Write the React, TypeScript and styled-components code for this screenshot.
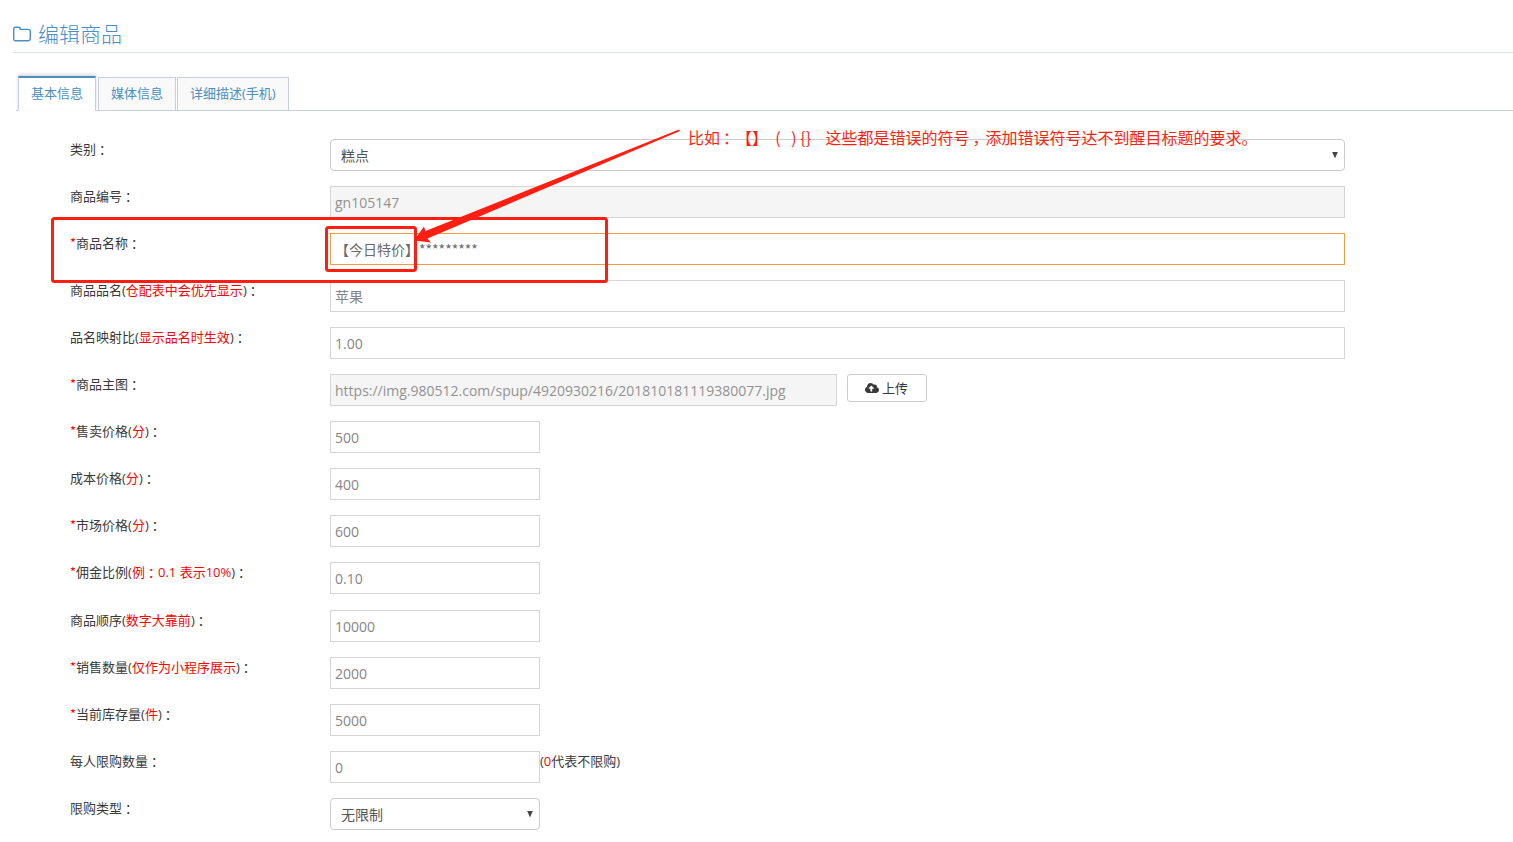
import React, { useId } from 'react';
import styled, { createGlobalStyle } from 'styled-components';
import { FaCloudUploadAlt } from 'react-icons/fa';

const sans = `"Open Sans", "Noto Sans CJK SC", sans-serif`;
const cjk = `"Noto Sans CJK SC", sans-serif`;
const red = '#ff1e12';

const GlobalStyle = createGlobalStyle`
  *, *::before, *::after { box-sizing: border-box; }
  body { margin: 0; background: #fff; color: #393939; font: 13px/20px ${sans}; }
`;

const Page = styled.main`
  position: relative;
  padding: 20px 0 12px 13px;
`;

const Header = styled.header`
  display: flex;
  align-items: flex-start;
  gap: 7px;
  height: 33px;
  border-bottom: 1px solid #d9e4ee;
  color: #478fca;
`;

const Title = styled.h1`
  margin: 0;
  font: 300 21px/26px ${cjk};
`;

const FolderIcon = styled.svg`
  width: 18px;
  height: 16px;
  margin-top: 6px;
  fill: none;
  stroke: currentColor;
  stroke-width: 1.4;
`;

const Tabs = styled.nav`
  display: flex;
  align-items: flex-end;
  gap: 1px;
  height: 35px;
  margin: 23px 0 28px 3px;
  padding-left: 2px;
  border-bottom: 1px solid #c5d0dc;
`;

const Tab = styled.a<{ $active?: boolean }>`
  height: ${p => (p.$active ? 35 : 33)}px;
  margin-bottom: ${p => (p.$active ? -1 : 0)}px;
  margin-right: ${p => (p.$active ? 1 : 0)}px;
  padding: 4px 12px 0;
  border: 1px solid #c5d0dc;
  border-top: ${p => (p.$active ? '2px solid #4c8fbd' : '1px solid #c5d0dc')};
  border-bottom: 0;
  background: ${p => (p.$active ? '#fff' : '#f9f9f9')};
  box-shadow: ${p => (p.$active ? '0 -2px 3px rgba(0, 0, 0, 0.15)' : 'none')};
  color: #4c8fbd;
  line-height: 22px;
  text-decoration: none;
  white-space: nowrap;
`;

const Form = styled.form`
  display: flex;
  flex-direction: column;
  gap: 16px;
  margin: 0 168px 0 57px;
`;

const Group = styled.div`
  display: flex;
  flex-direction: column;
  gap: 15px;
`;

const Row = styled.div`
  display: grid;
  grid-template-columns: 260px minmax(0, 1fr);
  min-height: 32px;
`;

const Label = styled.label`
  white-space: nowrap;
`;

const Mark = styled.span`
  color: #f00;
`;

const Star = styled(Mark)`
  font-family: ${cjk};
`;

const Mid = styled.span`
  margin: 0 -3px 0 3px;
  font-family: ${cjk};
`;

const Field = styled.div`
  display: flex;
  align-items: flex-start;
`;

type Size = 'full' | 'half' | 'small';
const widths: Record<Size, string> = { full: '100%', half: 'calc(50% - 1px)', small: '210px' };

const Input = styled.input<{ $size: Size; $active?: boolean }>`
  width: ${p => widths[p.$size]};
  height: 32px;
  padding: 0 4px;
  border: 1px solid ${p => (p.$active ? '#f59942' : '#d5d5d5')};
  border-radius: 0;
  outline: 0;
  background: ${p => (p.readOnly ? '#f5f5f5' : '#fff')};
  color: ${p => (p.$active ? '#696969' : p.readOnly ? '#939192' : '#858585')};
  font: 14px/20px ${p => (p.$active ? cjk : sans)};
`;

const SelectBox = styled.div<{ $size: Size }>`
  display: grid;
  align-items: center;
  width: ${p => widths[p.$size]};
`;

const Select = styled.select`
  grid-area: 1 / 1;
  width: 100%;
  height: 32px;
  padding: 0 24px 0 10px;
  border: 1px solid #ccc;
  border-radius: 4px;
  appearance: none;
  background: #fff;
  color: #555;
  font: 14px/20px ${cjk};
`;

const Caret = styled.span`
  grid-area: 1 / 1;
  justify-self: end;
  z-index: 1;
  width: 6px;
  height: 7px;
  margin-right: 7px;
  background: #444;
  clip-path: polygon(0 0, 100% 0, 50% 100%);
  pointer-events: none;
`;

const Upload = styled.button`
  display: flex;
  align-items: center;
  justify-content: center;
  gap: 3px;
  width: 80px;
  height: 28px;
  margin-left: 10px;
  padding: 0;
  border: 1px solid #ccc;
  border-radius: 3px;
  background: #fff;
  color: #393939;
  font: 13px/20px ${cjk};
`;

const Markup = styled.svg`
  position: absolute;
  top: 0;
  left: 0;
  width: 700px;
  height: 300px;
  pointer-events: none;
`;

const Note = styled.p`
  position: absolute;
  top: 125px;
  left: 688px;
  margin: 0;
  color: ${red};
  font: 16px/24px ${cjk};
  text-spacing-trim: space-all;
  white-space: pre;
  pointer-events: none;
`;

type RowProps = {
  label: string;
  hint?: string;
  required?: boolean;
  children: (id: string) => React.ReactNode;
};

const centred = (text: string) =>
  text.split('：').map((part, i) => (
    <React.Fragment key={i}>{i > 0 && <Mid>：</Mid>}{part}</React.Fragment>
  ));

function FormRow({ label, hint, required, children }: RowProps) {
  const id = useId();
  return (
    <Row>
      <Label htmlFor={id}>
        {required && <Star>*</Star>}
        {label}
        {hint && <>(<Mark>{centred(hint)}</Mark>)</>}
        {centred('：')}
      </Label>
      <Field>{children(id)}</Field>
    </Row>
  );
}

type TextRowProps = Omit<RowProps, 'children'> & {
  value: string;
  size?: Size;
  active?: boolean;
  readOnly?: boolean;
  after?: React.ReactNode;
};

function TextRow({ value, size = 'small', active, readOnly, after, ...row }: TextRowProps) {
  return (
    <FormRow {...row}>
      {id => (
        <>
          <Input id={id} type="text" defaultValue={value} $size={size} $active={active} readOnly={readOnly} />
          {after}
        </>
      )}
    </FormRow>
  );
}

function SelectRow({ label, option, size }: { label: string; option: string; size: Size }) {
  return (
    <FormRow label={label}>
      {id => (
        <SelectBox $size={size}>
          <Select id={id}><option>{option}</option></Select>
          <Caret />
        </SelectBox>
      )}
    </FormRow>
  );
}

export default function App() {
  return (
    <Page lang="zh-CN">
      <GlobalStyle />
      <Header>
        <FolderIcon viewBox="0 0 18 16">
          <path d="M.7 3.2Q.7 1.2 2.7 1.2H5.6Q7.4 1.2 7.4 3.4H15.2Q17.3 3.4 17.3 5.4V12.6Q17.3 14.7 15.2 14.7H2.7Q.7 14.7 .7 12.6Z" />
        </FolderIcon>
        <Title>编辑商品</Title>
      </Header>
      <Tabs>
        <Tab href="#basic" $active>基本信息</Tab>
        <Tab href="#media">媒体信息</Tab>
        <Tab href="#detail">详细描述(手机)</Tab>
      </Tabs>
      <Form>
        <Group>
          <SelectRow label="类别" option="糕点" size="full" />
          <TextRow label="商品编号" value="gn105147" size="full" readOnly />
          <TextRow label="商品名称" value="【今日特价】*********" size="full" required active />
          <TextRow label="商品品名" hint="仓配表中会优先显示" value="苹果" size="full" />
          <TextRow label="品名映射比" hint="显示品名时生效" value="1.00" size="full" />
          <TextRow
            label="商品主图"
            value="https://img.980512.com/spup/4920930216/201810181119380077.jpg"
            size="half"
            required
            readOnly
            after={<Upload type="button"><FaCloudUploadAlt size={14} />上传</Upload>}
          />
          <TextRow label="售卖价格" hint="分" value="500" required />
          <TextRow label="成本价格" hint="分" value="400" />
          <TextRow label="市场价格" hint="分" value="600" required />
          <TextRow label="佣金比例" hint="例：0.1 表示10%" value="0.10" required />
        </Group>
        <Group>
          <TextRow label="商品顺序" hint="数字大靠前" value="10000" />
          <TextRow label="销售数量" hint="仅作为小程序展示" value="2000" required />
          <TextRow label="当前库存量" hint="件" value="5000" required />
          <TextRow label="每人限购数量" value="0" after={<span>(<Mark>0</Mark>代表不限购)</span>} />
          <SelectRow label="限购类型" option="无限制" size="small" />
        </Group>
      </Form>
      <Markup viewBox="0 0 700 300">
        <g fill="none" stroke={red} strokeWidth="3">
          <rect x="52.5" y="218.5" width="554" height="63" rx="2" />
          <rect x="326.5" y="227.5" width="89" height="43" rx="2" />
        </g>
        <path d="M679 129.5L425.5 231L424 226.5L414 240.5L431 242.5L427.5 238.5L680 131Z" fill={red} />
      </Markup>
      <Note>比如{centred('：')}【】  (   ) {'{}'}    这些都是错误的符号<Mid>，</Mid>添加错误符号达不到醒目标题的要求。</Note>
    </Page>
  );
}
